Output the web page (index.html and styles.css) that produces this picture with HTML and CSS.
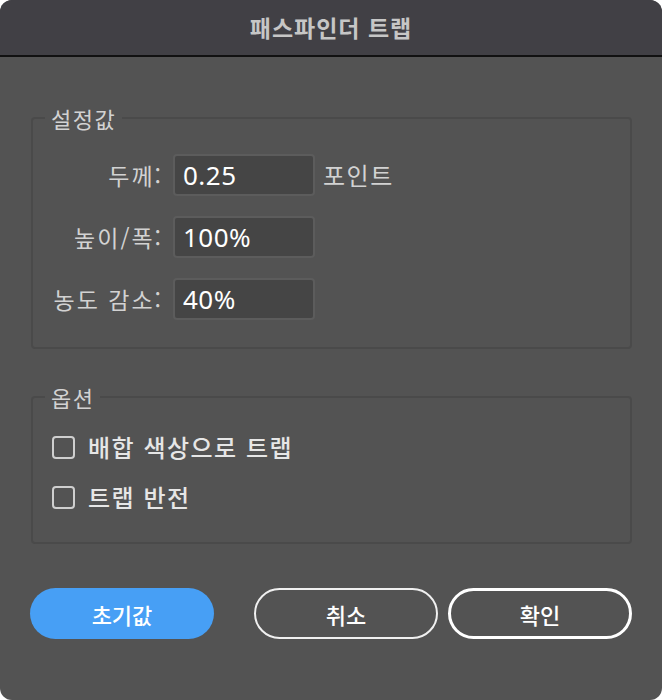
FILE: index.html
```html
<!DOCTYPE html>
<html lang="ko">
<head>
  <meta charset="UTF-8" />
  <meta name="viewport" content="width=device-width, initial-scale=1.0"/>
  <link rel="stylesheet" href="styles.css">
</head>
<body>
  <div class="dialog">
    <div class="title-bar">패스파인더 트랩</div>
    <div class="dialog-body">
      <fieldset class="group">
        <legend>설정값</legend>
        <div class="field-row">
          <label class="field-label" for="thick">두께:</label>
          <input id="thick" class="field-input" type="text" value="0.25">
          <span class="field-unit">포인트</span>
        </div>
        <div class="field-row">
          <label class="field-label" for="ratio">높이/폭:</label>
          <input id="ratio" class="field-input" type="text" value="100%">
        </div>
        <div class="field-row">
          <label class="field-label" for="tint">농도 감소:</label>
          <input id="tint" class="field-input" type="text" value="40%">
        </div>
      </fieldset>

      <fieldset class="group options">
        <legend>옵션</legend>
        <label class="check-row"><span class="check-box"></span>배합 색상으로 트랩</label>
        <label class="check-row"><span class="check-box"></span>트랩 반전</label>
      </fieldset>

      <div class="button-bar">
        <button class="btn btn-reset">초기값</button>
        <button class="btn btn-cancel">취소</button>
        <button class="btn btn-ok">확인</button>
      </div>
    </div>
  </div>
</body>
</html>
```

FILE: styles.css
```css
html, body {
  margin: 0;
  padding: 0;
  background: #ffffff;
}
body {
  font-family: 'Noto Sans CJK KR', 'Noto Sans', sans-serif;
}
.dialog {
  width: 662px;
  height: 700px;
  background: #535353;
  border-radius: 12px;
  overflow: hidden;
}
.title-bar {
  height: 55px;
  line-height: 55px;
  background: #414045;
  border-bottom: 2px solid #111;
  color: #c6c6c6;
  text-align: center;
  font-size: 23px;
  font-weight: bold;
  letter-spacing: 1px;
}
.dialog-body {
  padding: 49px 30px 0 31px;
}
.group {
  margin: 0;
  padding: 24px 12px 27px 12px;
  border: 2px solid #4a4a4a;
  border-radius: 4px;
}
.group legend {
  padding: 0 6px;
  font-size: 22px;
  line-height: 24px;
  letter-spacing: 1.5px;
  color: #d2d2d2;
}
.field-row {
  display: flex;
  align-items: center;
  margin-bottom: 20px;
}
.field-row:last-child {
  margin-bottom: 0;
}
.field-label {
  width: 120px;
  text-align: right;
  font-size: 23px;
  line-height: 30px;
  letter-spacing: 2px;
  color: #d2d2d2;
  margin-right: 10px;
  margin-left: -2px;
  white-space: nowrap;
}
.field-input {
  box-sizing: border-box;
  width: 142px;
  height: 42px;
  background: #454545;
  border: 2px solid #5c5c5c;
  border-radius: 4px;
  color: #ffffff;
  font-family: 'Noto Sans', sans-serif;
  font-size: 26px;
  letter-spacing: 0.5px;
  padding: 0 8px;
  outline: none;
}
.field-unit {
  margin-left: 8px;
  font-size: 24px;
  line-height: 30px;
  letter-spacing: 1.5px;
  color: #d2d2d2;
}
.options {
  margin-top: 36px;
  padding: 26px 12px 33px 19px;
}
.options legend {
  margin-left: -7px;
}
.check-row {
  display: flex;
  align-items: center;
  height: 24px;
  font-size: 24px;
  line-height: 24px;
  letter-spacing: 1.5px;
  font-weight: 500;
  color: #e6e6e6;
  margin-bottom: 26px;
}
.check-row:last-child {
  margin-bottom: 0;
}
.check-box {
  box-sizing: border-box;
  width: 23px;
  height: 23px;
  border: 2px solid #cfcfcf;
  border-radius: 4px;
  margin-right: 13px;
}
.button-bar {
  display: flex;
  margin-top: 44px;
  margin-left: -1px;
}
.btn {
  box-sizing: border-box;
  width: 184px;
  height: 51px;
  border-radius: 26px;
  font-family: 'Noto Sans CJK KR', sans-serif;
  font-size: 22px;
  font-weight: 500;
  color: #ffffff;
  background: transparent;
  cursor: pointer;
}
.btn-reset {
  background: #479ff5;
  border: none;
}
.btn-cancel {
  margin-left: auto;
  border: 2px solid #f0f0f0;
}
.btn-ok {
  margin-left: 10px;
  border: 3px solid #ffffff;
}
```
